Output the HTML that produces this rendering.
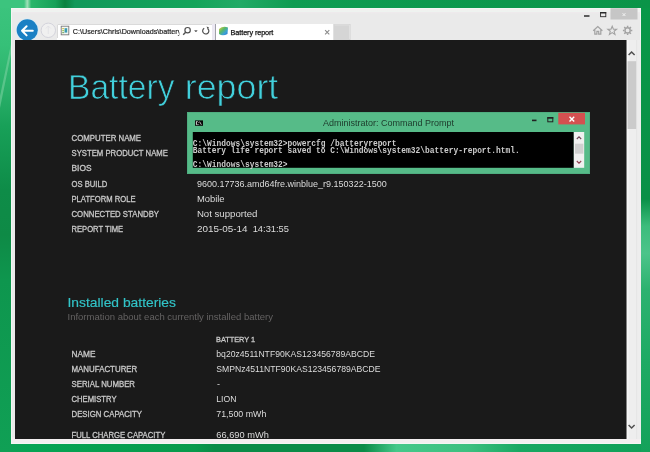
<!DOCTYPE html>
<html><head><meta charset="utf-8">
<style>
*{margin:0;padding:0;box-sizing:border-box}
html,body{width:650px;height:452px;overflow:hidden}
body{position:relative;font-family:"Liberation Sans",sans-serif;background:#0f9a50}
.a{position:absolute;white-space:nowrap}
#bg{position:absolute;left:0;top:0;width:650px;height:452px;
 background:linear-gradient(90deg,#3cc47c 0px,#2cb86c 20px,#139d52 70px,#0b9a4c 200px,#0d9d50 400px,#0a9a4c 650px)}
#win{position:absolute;left:11px;top:8px;width:630px;height:436px;background:linear-gradient(#f3efef 0px,#eef3f0 2.5px,#eeeaec 3.5px,#eaeaea 5px,#eaeaea calc(100% - 6px),#f3eff0 calc(100% - 5px),#f3eff0 100%);border:1px solid #f4f6f4}
#content{position:absolute;left:15px;top:40px;width:612px;height:399px;background:#1a1a1a}
#sb{position:absolute;left:627px;top:40px;width:13px;height:399px;background:#e8e8e8}
svg text{white-space:pre}
svg.a{will-change:transform}
</style></head><body>
<svg class="a" style="left:0;top:0" width="650" height="452">
<defs>
<linearGradient id="gt" x1="0" y1="0" x2="650" y2="0" gradientUnits="userSpaceOnUse">
<stop offset="0" stop-color="#3cc47e"/><stop offset="0.037" stop-color="#3cc47e"/><stop offset="0.042" stop-color="#9fe0b8"/><stop offset="0.048" stop-color="#2ab66a"/><stop offset="0.085" stop-color="#17a058"/><stop offset="0.1" stop-color="#0a8240"/><stop offset="0.115" stop-color="#12985a"/><stop offset="0.3" stop-color="#14a45a"/><stop offset="0.37" stop-color="#22aa66"/><stop offset="0.45" stop-color="#0f9c52"/><stop offset="1" stop-color="#0a9448"/>
</linearGradient>
<linearGradient id="gl" x1="0" y1="0" x2="0" y2="452" gradientUnits="userSpaceOnUse">
<stop offset="0" stop-color="#3cc47e"/><stop offset="0.1" stop-color="#36c078"/><stop offset="0.2" stop-color="#2ab06a"/><stop offset="0.28" stop-color="#18a058"/><stop offset="0.42" stop-color="#0e8c48"/><stop offset="0.52" stop-color="#0e8a46"/><stop offset="0.62" stop-color="#0e964e"/><stop offset="1" stop-color="#10a055"/>
</linearGradient>
<linearGradient id="gr" x1="0" y1="0" x2="0" y2="452" gradientUnits="userSpaceOnUse">
<stop offset="0" stop-color="#089848"/><stop offset="0.44" stop-color="#0a9048"/><stop offset="0.5" stop-color="#3cbc7c"/><stop offset="0.56" stop-color="#4cc48a"/><stop offset="0.64" stop-color="#2cb270"/><stop offset="0.8" stop-color="#1eaa64"/><stop offset="1" stop-color="#14a25a"/>
</linearGradient>
<linearGradient id="gb" x1="0" y1="0" x2="650" y2="0" gradientUnits="userSpaceOnUse">
<stop offset="0" stop-color="#10a055"/><stop offset="0.05" stop-color="#06a454"/><stop offset="0.3" stop-color="#089a4c"/><stop offset="0.33" stop-color="#0a8c48"/><stop offset="0.56" stop-color="#0a8c48"/><stop offset="0.61" stop-color="#45c88a"/><stop offset="0.72" stop-color="#3dc080"/><stop offset="0.8" stop-color="#18a862"/><stop offset="1" stop-color="#10a058"/>
</linearGradient>
</defs>
<rect x="0" y="0" width="650" height="8" fill="url(#gt)"/>
<rect x="0" y="8" width="11" height="444" fill="url(#gl)"/>
<rect x="641" y="8" width="9" height="444" fill="url(#gr)"/>
<rect x="11" y="444" width="630" height="8" fill="url(#gb)"/>
<polygon points="0,96 11,44 11,54 0,108" fill="#7fd4a4" opacity="0.55"/>
</svg>
<div id="win"></div>
<!-- chrome -->
<svg class="a" style="left:0;top:0" width="650" height="452">
<defs>
<linearGradient id="fav" x1="0" y1="0" x2="1" y2="1"><stop offset="0" stop-color="#e8d040"/><stop offset="0.4" stop-color="#58b868"/><stop offset="0.7" stop-color="#3aa0d8"/><stop offset="1" stop-color="#2a70c0"/></linearGradient>
</defs>
<!-- title bar buttons -->
<rect x="584" y="15.2" width="5.5" height="1.6" fill="#3a3a3a"/>
<rect x="600.6" y="12.5" width="5.2" height="4.2" fill="none" stroke="#2a2a2a" stroke-width="0.9"/>
<rect x="600.2" y="12" width="6" height="1.5" fill="#2a2a2a"/>
<rect x="610.5" y="8.2" width="27" height="11.3" fill="#c6c6c6"/>
<path d="M622.6 13.2 L625.4 16 M625.4 13.2 L622.6 16" stroke="#f4f4f4" stroke-width="1"/>
<!-- back -->
<circle cx="27.25" cy="29.9" r="11.4" fill="#d8ecf6"/>
<circle cx="27.25" cy="29.9" r="10.6" fill="#1a80c4"/>
<path d="M22 30.8 H32.8 M26.6 26.2 L22 30.8 L26.6 35.4" stroke="#fff" stroke-width="2" fill="none" stroke-linecap="round" stroke-linejoin="round"/>
<!-- forward -->
<circle cx="48.3" cy="30.3" r="7.2" fill="#f0f0f0" stroke="#cfcfd8" stroke-width="0.9"/>
<path d="M48.3 26 V34 M45.8 28.5 L48.3 26 L50.8 28.5" stroke="#e0e0e4" stroke-width="0.8" fill="none"/>
<!-- address bar -->
<rect x="57" y="24" width="158" height="16" fill="#ffffff"/>
<path d="M57.5 38 V24.5 H214" fill="none" stroke="#dadada" stroke-width="1"/>
<rect x="212" y="24" width="3" height="16" fill="#ebe8f2"/>
<rect x="215" y="24" width="1" height="16" fill="#a0a0a8"/>
<rect x="61.2" y="26.2" width="7.6" height="8.6" fill="#f4f8f4" stroke="#7a7a7a" stroke-width="0.9"/>
<rect x="62.2" y="28" width="2" height="1.2" fill="#d8c850"/>
<rect x="62.2" y="30" width="2" height="1.2" fill="#a8c860"/>
<rect x="62.2" y="32" width="2" height="1.2" fill="#88b070"/>
<rect x="64.6" y="28.2" width="2.6" height="4.4" fill="#3a9ab0"/>
<circle cx="187.6" cy="30.2" r="2.7" fill="none" stroke="#505050" stroke-width="1.2"/>
<path d="M185.7 32.2 L183.2 34.8" stroke="#505050" stroke-width="1.4"/>
<path d="M194.6 30.6 H197.2 L195.9 32 Z" fill="#555" stroke="#555" stroke-width="0.5"/>
<path d="M208.2 29 A3.1 3.1 0 1 1 204.2 28.2" fill="none" stroke="#505050" stroke-width="1.2"/>
<path d="M206.6 26.6 L209 27.6 L207.8 30 Z" fill="#505050"/>
<!-- tab -->
<rect x="216" y="24" width="117.5" height="16" fill="#ffffff"/>
<path d="M219 29 Q223 25.5 228 27.5 L227.5 34 Q222.5 36.5 219 34 Z" fill="url(#fav)"/>
<path d="M325.1 30.2 L329.3 34.4 M329.3 30.2 L325.1 34.4" stroke="#8a8a8a" stroke-width="1.1"/>
<rect x="333.4" y="24" width="17.2" height="16" fill="#d5d5d5"/>
<path d="M334.5 25 H349.5 V39" fill="none" stroke="#e2e2e2" stroke-width="0.8"/>
<!-- home star gear -->
<g stroke="#a2a2a2" stroke-width="1.2" fill="none">
<path d="M593.2 30.8 L597.8 26.6 L602.4 30.8 M594.8 29.6 V34.2 H596.9 V31.4 H598.7 V34.2 H600.8 V29.6"/>
<path d="M612.2 26.2 L613.4 29.2 L616.6 29.3 L614.1 31.3 L615 34.4 L612.2 32.6 L609.4 34.4 L610.3 31.3 L607.8 29.3 L611 29.2 Z" stroke-width="1.1"/>
<circle cx="627.6" cy="30.4" r="2.6" stroke-width="1.4"/>
<path d="M630.80 30.40 L632.30 30.40 M629.86 32.66 L630.92 33.72 M627.60 33.60 L627.60 35.10 M625.34 32.66 L624.28 33.72 M624.40 30.40 L622.90 30.40 M625.34 28.14 L624.28 27.08 M627.60 27.20 L627.60 25.70 M629.86 28.14 L630.92 27.08" stroke-width="1.5"/>
</g>
</svg>

<div id="content"></div>
<svg class="a" style="left:0;top:0" width="650" height="452">
<rect x="626.5" y="40" width="12" height="399" fill="#eeeeee"/><rect x="627" y="40" width="1.5" height="399" fill="#f6f6f6"/><rect x="636.2" y="40" width="1.2" height="399" fill="#e4e4e4"/><rect x="637.4" y="40" width="3.6" height="399" fill="#ededed"/>
<rect x="627.6" y="61.2" width="8.6" height="67.8" fill="#cbcbcb"/>
<path d="M628.6 55 L631.6 52 L634.6 55" stroke="#505050" stroke-width="1.5" fill="none"/>
<path d="M628.6 425 L631.6 428 L634.6 425" stroke="#505050" stroke-width="1.5" fill="none"/>
</svg>
<svg class="a" style="left:0;top:0;will-change:transform" width="650" height="452" viewBox="0 0 650 452">
<defs><clipPath id="cc"><rect x="15" y="40" width="612" height="399"/></clipPath></defs>
<g clip-path="url(#cc)">
<text x="68.0" y="99.0" font-size="34.6" font-weight="normal" fill="#42d0dc" font-family="Liberation Sans" textLength="106.5" lengthAdjust="spacingAndGlyphs" stroke="#1a1a1a" stroke-width="0.75">Battery</text>
<text x="184.8" y="99.0" font-size="34.6" font-weight="normal" fill="#42d0dc" font-family="Liberation Sans" textLength="93.5" lengthAdjust="spacingAndGlyphs" stroke="#1a1a1a" stroke-width="0.75">report</text>
<text x="71.5" y="141" font-size="8.4" font-weight="normal" fill="#c8c8c8" font-family="Liberation Sans" textLength="69.6" lengthAdjust="spacingAndGlyphs" stroke="#c8c8c8" stroke-width="0.3">COMPUTER NAME</text>
<text x="71.5" y="156" font-size="8.4" font-weight="normal" fill="#c8c8c8" font-family="Liberation Sans" textLength="96.4" lengthAdjust="spacingAndGlyphs" stroke="#c8c8c8" stroke-width="0.3">SYSTEM PRODUCT NAME</text>
<text x="71.5" y="171.3" font-size="8.4" font-weight="normal" fill="#c8c8c8" font-family="Liberation Sans" stroke="#c8c8c8" stroke-width="0.3">BIOS</text>
<text x="71.5" y="186.5" font-size="8.4" font-weight="normal" fill="#c8c8c8" font-family="Liberation Sans" textLength="35.8" lengthAdjust="spacingAndGlyphs" stroke="#c8c8c8" stroke-width="0.3">OS BUILD</text>
<text x="71.5" y="201.5" font-size="8.4" font-weight="normal" fill="#c8c8c8" font-family="Liberation Sans" textLength="64" lengthAdjust="spacingAndGlyphs" stroke="#c8c8c8" stroke-width="0.3">PLATFORM ROLE</text>
<text x="71.5" y="216.5" font-size="8.4" font-weight="normal" fill="#c8c8c8" font-family="Liberation Sans" textLength="87.5" lengthAdjust="spacingAndGlyphs" stroke="#c8c8c8" stroke-width="0.3">CONNECTED STANDBY</text>
<text x="71.5" y="231.5" font-size="8.4" font-weight="normal" fill="#c8c8c8" font-family="Liberation Sans" textLength="51.7" lengthAdjust="spacingAndGlyphs" stroke="#c8c8c8" stroke-width="0.3">REPORT TIME</text>
<text x="196.9" y="186.7" font-size="9.2" font-weight="normal" fill="#dcdcdc" font-family="Liberation Sans" textLength="189.8" lengthAdjust="spacingAndGlyphs" >9600.17736.amd64fre.winblue_r9.150322-1500</text>
<text x="196.9" y="201.8" font-size="9" font-weight="normal" fill="#dcdcdc" font-family="Liberation Sans" textLength="27.7" lengthAdjust="spacingAndGlyphs" >Mobile</text>
<text x="196.9" y="216.8" font-size="9" font-weight="normal" fill="#dcdcdc" font-family="Liberation Sans" textLength="60.5" lengthAdjust="spacingAndGlyphs" >Not supported</text>
<text x="196.9" y="231.8" font-size="9" font-weight="normal" fill="#dcdcdc" font-family="Liberation Sans" textLength="50.6" lengthAdjust="spacingAndGlyphs" >2015-05-14</text>
<text x="252.7" y="231.8" font-size="9" font-weight="normal" fill="#dcdcdc" font-family="Liberation Sans" textLength="36.3" lengthAdjust="spacingAndGlyphs" >14:31:55</text>
<text x="67.5" y="306.8" font-size="12.2" font-weight="normal" fill="#32c4c8" font-family="Liberation Sans" textLength="108.5" lengthAdjust="spacingAndGlyphs" stroke="#32c4c8" stroke-width="0.15">Installed batteries</text>
<text x="67.5" y="320" font-size="9.4" font-weight="normal" fill="#646262" font-family="Liberation Sans" textLength="205.5" lengthAdjust="spacingAndGlyphs" >Information about each currently installed battery</text>
<text x="216" y="341.7" font-size="8" font-weight="normal" fill="#c8c8c8" font-family="Liberation Sans" textLength="39" lengthAdjust="spacingAndGlyphs" stroke="#c8c8c8" stroke-width="0.3">BATTERY 1</text>
<text x="71.5" y="356.8" font-size="8.4" font-weight="normal" fill="#c8c8c8" font-family="Liberation Sans" textLength="24" lengthAdjust="spacingAndGlyphs" stroke="#c8c8c8" stroke-width="0.3">NAME</text>
<text x="71.5" y="371.9" font-size="8.4" font-weight="normal" fill="#c8c8c8" font-family="Liberation Sans" textLength="65.8" lengthAdjust="spacingAndGlyphs" stroke="#c8c8c8" stroke-width="0.3">MANUFACTURER</text>
<text x="71.5" y="387.2" font-size="8.4" font-weight="normal" fill="#c8c8c8" font-family="Liberation Sans" textLength="63.5" lengthAdjust="spacingAndGlyphs" stroke="#c8c8c8" stroke-width="0.3">SERIAL NUMBER</text>
<text x="71.5" y="402.3" font-size="8.4" font-weight="normal" fill="#c8c8c8" font-family="Liberation Sans" textLength="45.1" lengthAdjust="spacingAndGlyphs" stroke="#c8c8c8" stroke-width="0.3">CHEMISTRY</text>
<text x="71.5" y="416.9" font-size="8.4" font-weight="normal" fill="#c8c8c8" font-family="Liberation Sans" textLength="70.5" lengthAdjust="spacingAndGlyphs" stroke="#c8c8c8" stroke-width="0.3">DESIGN CAPACITY</text>
<text x="71.5" y="437.8" font-size="8.4" font-weight="normal" fill="#c8c8c8" font-family="Liberation Sans" textLength="93.8" lengthAdjust="spacingAndGlyphs" stroke="#c8c8c8" stroke-width="0.3">FULL CHARGE CAPACITY</text>
<text x="216.3" y="357" font-size="9" font-weight="normal" fill="#dcdcdc" font-family="Liberation Sans" textLength="158.7" lengthAdjust="spacingAndGlyphs" >bq20z4511NTF90KAS123456789ABCDE</text>
<text x="216.3" y="372.2" font-size="9" font-weight="normal" fill="#dcdcdc" font-family="Liberation Sans" textLength="164.2" lengthAdjust="spacingAndGlyphs" >SMPNz4511NTF90KAS123456789ABCDE</text>
<text x="217" y="387.4" font-size="9" font-weight="normal" fill="#dcdcdc" font-family="Liberation Sans" >-</text>
<text x="216.3" y="402.4" font-size="9" font-weight="normal" fill="#dcdcdc" font-family="Liberation Sans" textLength="20.2" lengthAdjust="spacingAndGlyphs" >LION</text>
<text x="216.3" y="416.9" font-size="9" font-weight="normal" fill="#dcdcdc" font-family="Liberation Sans" textLength="50" lengthAdjust="spacingAndGlyphs" >71,500 mWh</text>
<text x="216.3" y="437.8" font-size="9" font-weight="normal" fill="#dcdcdc" font-family="Liberation Sans" textLength="52.5" lengthAdjust="spacingAndGlyphs" >66,690 mWh</text>
</g>
<defs><clipPath id="ac"><rect x="59" y="24" width="120.3" height="15"/></clipPath></defs>
<text x="72.8" y="34.3" font-size="7.6" font-weight="normal" fill="#222" font-family="Liberation Sans" textLength="108.5" lengthAdjust="spacingAndGlyphs" clip-path="url(#ac)" stroke="#222" stroke-width="0.2">C:\Users\Chris\Downloads\battery</text>
<text x="230.6" y="34.7" font-size="7.3" font-weight="normal" fill="#111" font-family="Liberation Sans" textLength="42.8" lengthAdjust="spacing" stroke="#111" stroke-width="0.25">Battery report</text>
</svg>
<!-- cmd window -->
<svg class="a" style="left:0;top:0" width="650" height="452">
<rect x="187" y="112" width="403" height="62" fill="#56bb88"/>
<rect x="187.5" y="112.5" width="402" height="61" fill="none" stroke="#4fae80" stroke-width="1"/>
<rect x="195" y="120.4" width="8" height="5.4" fill="#080808"/>
<path d="M197.6 121.6 H196.4 V124.6 H197.6" stroke="#e8e8e8" stroke-width="0.9" fill="none"/>
<path d="M198.6 122 v0.8 M198.6 124 v0.8" stroke="#bbb" stroke-width="0.7"/>
<path d="M199.6 121.6 L201.4 124.8" stroke="#ddd" stroke-width="0.8"/>
<text x="323" y="126" font-family="Liberation Sans" font-size="9.8" fill="#1d3a2b" textLength="131" lengthAdjust="spacingAndGlyphs">Administrator: Command Prompt</text>
<rect x="532" y="119.6" width="4.5" height="1.6" fill="#222"/>
<rect x="547.8" y="117.6" width="5" height="4.2" fill="none" stroke="#222" stroke-width="1"/>
<rect x="547.3" y="117.1" width="6" height="1.6" fill="#222"/>
<rect x="558.3" y="112.8" width="26.7" height="11.6" fill="#d55050"/>
<path d="M569.5 116.8 L574.2 121.5 M574.2 116.8 L569.5 121.5" stroke="#fff" stroke-width="1.4"/>
<rect x="192.8" y="132" width="381" height="35.8" fill="#000"/>
<g font-family="Liberation Mono" font-weight="bold" font-size="8.5" fill="#cccccc" lengthAdjust="spacingAndGlyphs">
<text x="192.8" y="145.6" textLength="203.8" lengthAdjust="spacingAndGlyphs">C:\Windows\system32&gt;powercfg /batteryreport</text>
<text x="192.8" y="152.8" textLength="327" lengthAdjust="spacingAndGlyphs">Battery life report saved to C:\Windows\system32\battery-report.html.</text>
<text x="192.8" y="167.2" textLength="94.8" lengthAdjust="spacingAndGlyphs">C:\Windows\system32&gt;</text>
</g>
<rect x="573.8" y="132" width="10.4" height="35.8" fill="#f0f0f0"/>
<rect x="575" y="143.7" width="8.4" height="10" fill="#d0d0d0"/>
<path d="M576.8 139 L579 136.8 L581.2 139" stroke="#704858" stroke-width="1.1" fill="none"/>
<path d="M576.8 161 L579 163.2 L581.2 161" stroke="#904050" stroke-width="1.1" fill="none"/>
</svg>

</body></html>
